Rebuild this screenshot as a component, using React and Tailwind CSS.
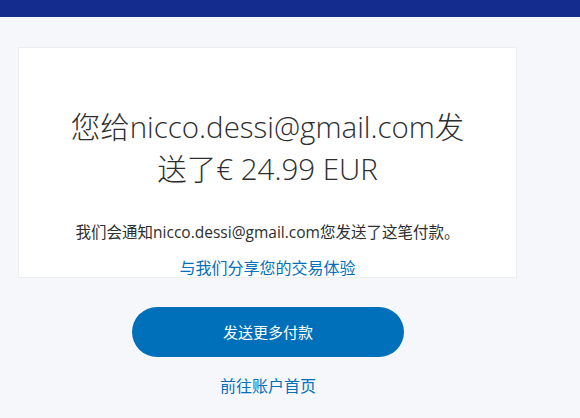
import React from 'react';

export default function App() {
  return (
    <div className="min-h-[418px] bg-[#f5f7fa] font-['Open_Sans','Noto_Sans_CJK_SC',sans-serif]">
      <div className="h-[17px] bg-[#142c8e]" />

      <div className="pt-[30px] pl-[18px]">
        <div className="w-[499px] h-[231px] bg-white border border-[#eceef0] flex flex-col items-center pt-[58px] px-12">
          <h1 className="text-center text-[29.5px] leading-[42px] font-light text-[#2c2e2f]">
            您给nicco.dessi@gmail.com发送了€ 24.99 EUR
          </h1>
          <p className="mt-8 text-[15.5px] leading-5 text-[#2c2e2f] text-center whitespace-nowrap">
            我们会通知nicco.dessi@gmail.com您发送了这笔付款。
          </p>
          <a href="#" className="mt-[17px] text-base leading-[18px] text-[#0070ba]">
            与我们分享您的交易体验
          </a>
        </div>
      </div>

      <div className="flex flex-col items-center pr-[44px] pt-[29px]">
        <button className="w-[272px] h-[50px] rounded-full bg-[#0070ba] text-white text-[15px] font-normal">
          发送更多付款
        </button>
        <a href="#" className="mt-[19px] text-base leading-5 text-[#0070ba]">
          前往账户首页
        </a>
      </div>
    </div>
  );
}
